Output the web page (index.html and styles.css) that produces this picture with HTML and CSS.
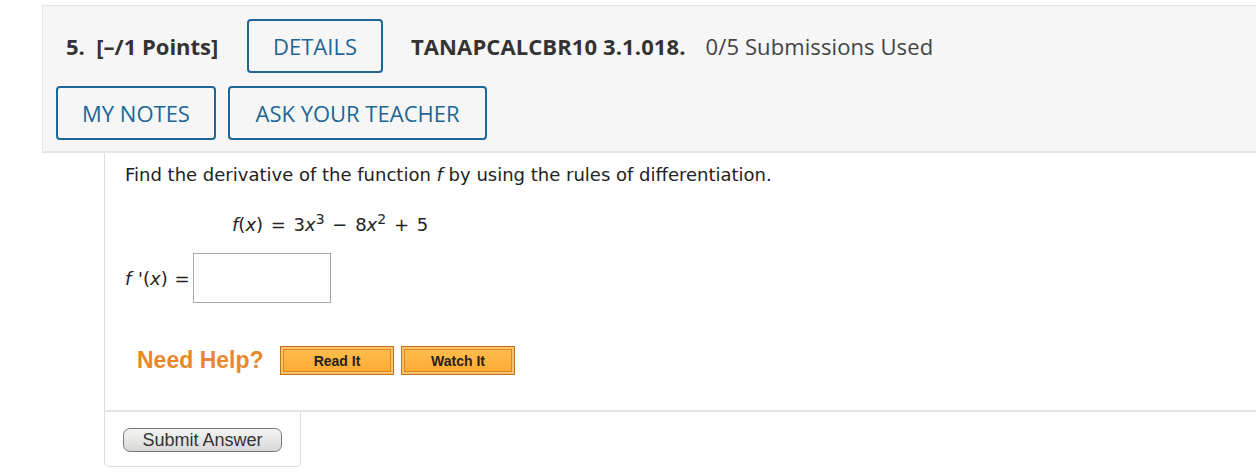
FILE: index.html
```html
<!DOCTYPE html>
<html>
<head>
<meta charset="utf-8">
<link rel="stylesheet" href="styles.css">
</head>
<body>
<div class="page">
  <div class="qhead">
    <div class="row row1">
      <span class="points">5.&nbsp; [–/1 Points]</span>
      <button class="btn-outline btn-details">DETAILS</button>
      <span class="code">TANAPCALCBR10 3.1.018.</span>
      <span class="subs">0/5 Submissions Used</span>
    </div>
    <div class="row row2">
      <button class="btn-outline btn-notes">MY NOTES</button>
      <button class="btn-outline btn-ask">ASK YOUR TEACHER</button>
    </div>
  </div>
  <div class="qbody">
    <p class="prompt">Find the derivative of the function <i>f</i> by using the rules of differentiation.</p>
    <p class="eq"><i>f</i>(<i>x</i>) = 3<i>x</i><sup>3</sup> − 8<i>x</i><sup>2</sup> + 5</p>
    <div class="answer">
      <span class="lbl"><i>f</i> '(<i>x</i>) =</span>
      <span class="input"></span>
    </div>
    <div class="help">
      <span class="need">Need Help?</span>
      <button class="obtn btn-read">Read It</button>
      <button class="obtn btn-watch">Watch It</button>
    </div>
  </div>
  <div class="submit-box">
    <button class="submit">Submit Answer</button>
  </div>
</div>
</body>
</html>
```

FILE: styles.css
```css
html, body {
  margin: 0;
  padding: 0;
  background: #fff;
}
.page {
  width: 1256px;
  height: 472px;
  overflow: hidden;
  position: relative;
}
.qhead {
  margin: 5px 0 0 42px;
  width: 1240px;
  background: #f6f6f6;
  border-top: 1px solid #e4e4e4;
  border-left: 1px solid #e4e4e4;
  border-bottom: 2px solid #e4e4e4;
  padding: 13px 0 11px 13px;
  font-family: "Open Sans", sans-serif;
  box-sizing: border-box;
}
.row {
  display: flex;
  align-items: center;
}
.row1 {
  height: 54px;
}
.row2 {
  margin-top: 13px;
  gap: 12px;
}
.points {
  margin-left: 10px;
  font-weight: 700;
  font-size: 22px;
  color: #333;
  width: 181px;
}
.btn-outline {
  box-sizing: border-box;
  height: 54px;
  background: #f6f6f6;
  border: 2px solid #1d6695;
  border-radius: 4px;
  color: #1d6695;
  font-family: "Open Sans", sans-serif;
  font-size: 22px;
  font-weight: 500;
  padding: 0;
  margin: 0;
}
.btn-details { width: 136px; }
.btn-notes { width: 160px; }
.btn-ask { width: 259px; }
.code {
  margin-left: 28px;
  font-weight: 700;
  font-size: 22px;
  color: #333;
  letter-spacing: 0.1px;
}
.subs {
  margin-left: 20px;
  font-size: 22px;
  color: #444;
  letter-spacing: 0.1px;
}
.qbody {
  margin-left: 104px;
  border-left: 1px solid #dedede;
  border-bottom: 2px solid #e4e4e4;
  height: 246px;
  padding: 11px 0 0 20px;
  font-family: "DejaVu Sans", Verdana, sans-serif;
  font-size: 18px;
  color: #222;
}
.prompt {
  margin: 0;
  line-height: 22px;
}
.eq {
  margin: 28px 0 0 107px;
  line-height: 22px;
  word-spacing: 2px;
}
.eq sup {
  font-size: 14px;
  line-height: 0;
}
.answer {
  display: flex;
  align-items: center;
  margin-top: 17px;
}
.lbl {
  flex: 0 0 68px;
  white-space: nowrap;
  word-spacing: 1px;
}
.input {
  box-sizing: border-box;
  width: 138px;
  height: 50px;
  border: 1px solid #a8a8a8;
  background: #fff;
}
.help {
  display: flex;
  align-items: center;
  margin-top: 43px;
  margin-left: 12px;
}
.need {
  font-family: "Liberation Sans", Arial, sans-serif;
  font-weight: 700;
  font-size: 23px;
  color: #e8882a;
  width: 143px;
}
.obtn {
  box-sizing: border-box;
  width: 114px;
  height: 29px;
  margin: 0 7px 0 0;
  padding: 0;
  background: linear-gradient(#ffbf50, #fda92e);
  border: 1px solid #c0701c;
  box-shadow: inset 0 0 0 2px #fcc46a, inset 0 0 0 3px #d7862b;
  font-family: "Liberation Sans", Arial, sans-serif;
  font-weight: 700;
  font-size: 14px;
  color: #222;
}
.submit-box {
  margin-left: 104px;
  width: 197px;
  height: 55px;
  box-sizing: border-box;
  border: 1px solid #dedede;
  border-top: none;
  border-radius: 0 0 5px 5px;
  padding: 16px 0 0 18px;
}
.submit {
  box-sizing: border-box;
  width: 159px;
  height: 24px;
  border: 1px solid #7a7a7a;
  border-radius: 7px;
  background: linear-gradient(#f4f4f4, #d8d8d8);
  font-family: "Liberation Sans", Arial, sans-serif;
  font-size: 18px;
  color: #333;
  padding: 0;
  line-height: 20px;
}
```
